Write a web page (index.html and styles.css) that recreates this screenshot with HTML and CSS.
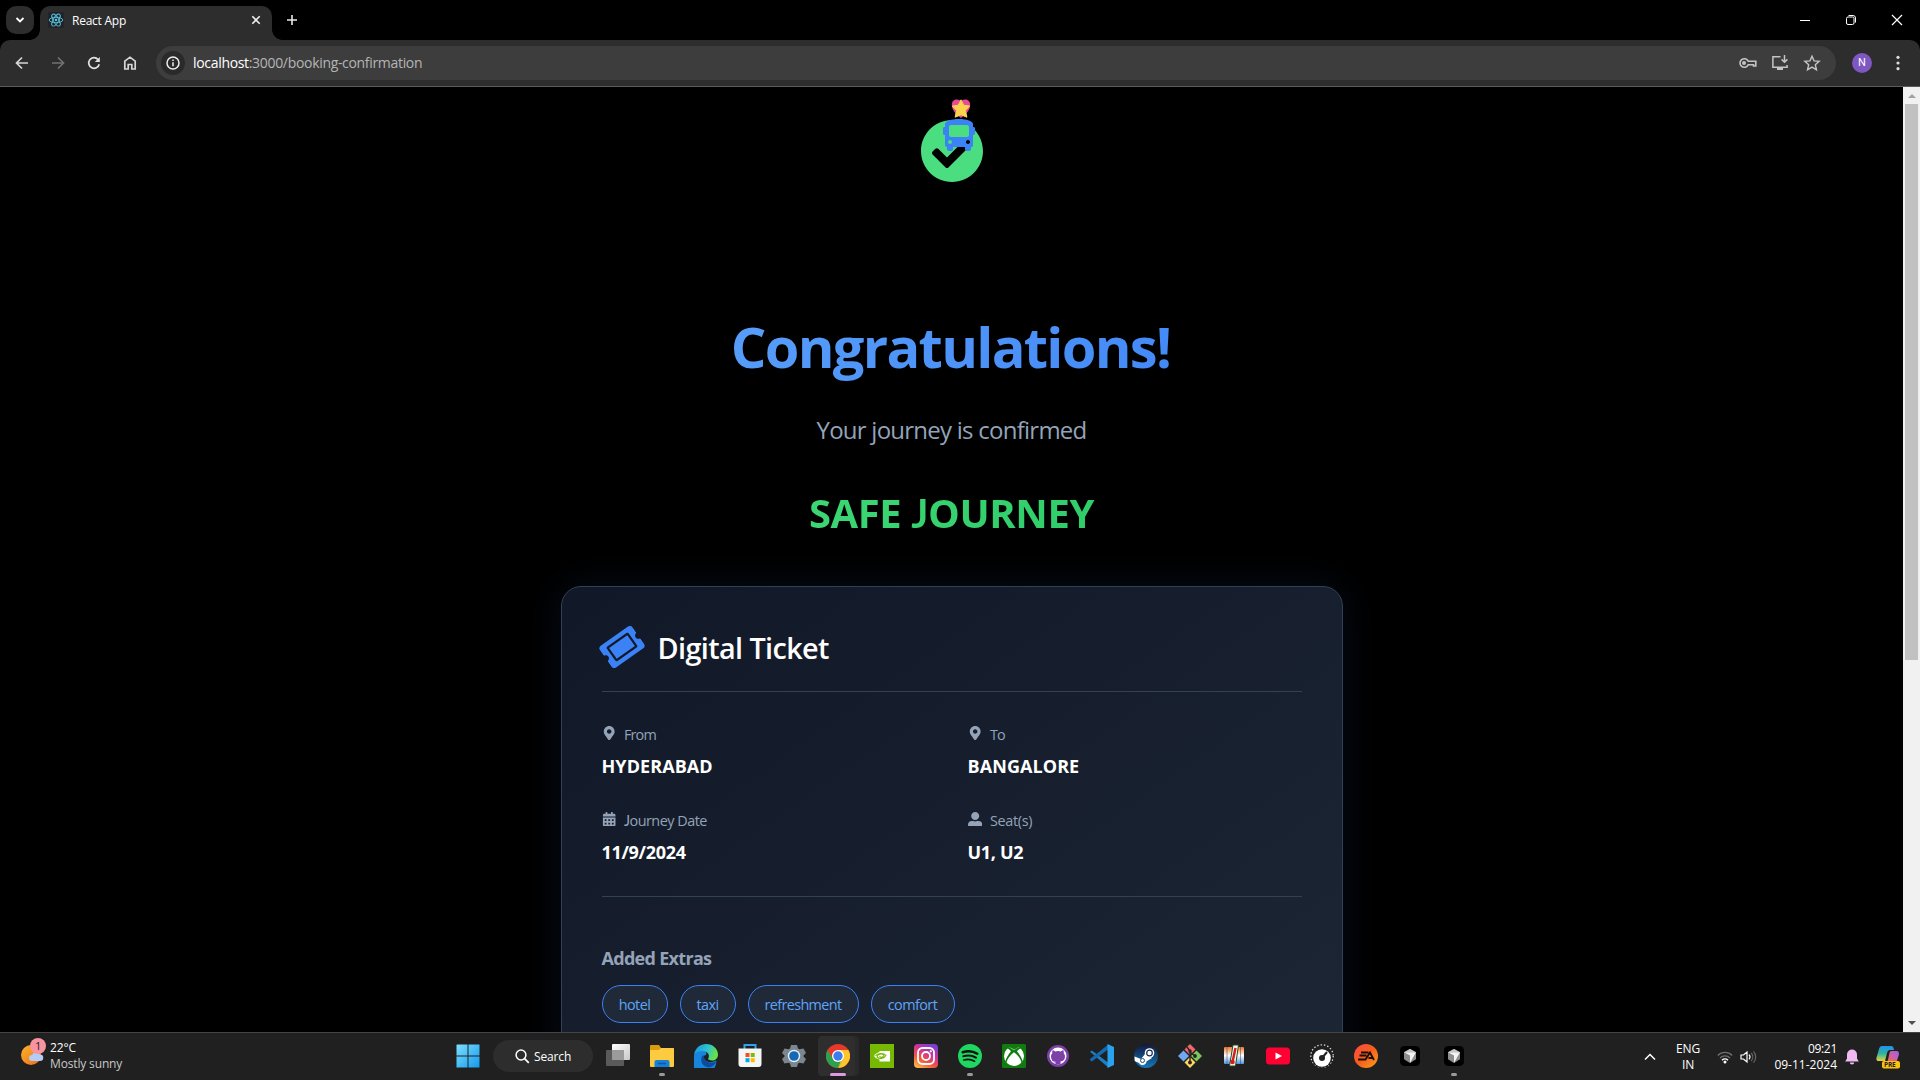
FILE: index.html
```html
<!DOCTYPE html>
<html lang="en">
<head>
<meta charset="utf-8">
<title>React App</title>
<link rel="stylesheet" href="styles.css">
</head>
<body>
<div class="tabs">
  <div class="tab-search"><svg width="10" height="10" viewBox="0 0 10 10"><path d="M1.5 3l3.5 3.5L8.500 3" fill="none" stroke="#fff" stroke-width="1.8"/></svg></div>
  <div class="tab">
    <svg class="favicon" width="16" height="16" viewBox="0 0 16 16"><rect width="16" height="16" rx="2" fill="#20232a"/><g fill="none" stroke="#58c4dc" stroke-width=".9"><ellipse cx="8" cy="8" rx="6.800" ry="2.700"/><ellipse cx="8" cy="8" rx="6.800" ry="2.700" transform="rotate(60 8 8)"/><ellipse cx="8" cy="8" rx="6.800" ry="2.700" transform="rotate(120 8 8)"/></g><circle cx="8" cy="8" r="1.300" fill="#58c4dc"/></svg>
    <span class="tab-title">React App</span>
    <svg class="tab-close" width="10" height="10" viewBox="0 0 10 10"><path d="M1.300 1.300l7.400 7.400M8.700 1.300L1.300 8.700" stroke="#eee" stroke-width="1.600"/></svg>
  </div>
  <svg class="new-tab" width="12" height="12" viewBox="0 0 12 12"><path d="M6 1v10M1 6h10" stroke="#e8e8e8" stroke-width="1.600"/></svg>
  <div class="window-controls">
    <svg width="12" height="12" viewBox="0 0 12 12"><path d="M1 6.500h10" stroke="#fff"/></svg>
    <svg width="12" height="12" viewBox="0 0 12 12"><rect x="1.500" y="3" width="7.500" height="7.500" rx="1.500" fill="none" stroke="#fff"/><path d="M3.500 1.500h4.500a2.500 2.500 0 0 1 2.500 2.500v4.500" fill="none" stroke="#fff"/></svg>
    <svg width="12" height="12" viewBox="0 0 12 12"><path d="M1 1l10 10M11 1L1 11" stroke="#fff" stroke-width="1.200"/></svg>
  </div>
</div>
<div class="toolbar">
  <svg class="nav" width="16" height="16" viewBox="0 0 16 16"><path d="M14 8H3M8 2.500L2.500 8 8 13.500" fill="none" stroke="#d6d6d6" stroke-width="1.700"/></svg>
  <svg class="nav" width="16" height="16" viewBox="0 0 16 16"><path d="M2 8h11M8 2.500L13.500 8 8 13.500" fill="none" stroke="#717171" stroke-width="1.700"/></svg>
  <svg class="nav" width="16" height="16" viewBox="0 0 16 16"><path d="M13.200 9.200A5.300 5.300 0 1 1 12 4.500" fill="none" stroke="#e2e2e2" stroke-width="1.700"/><path d="M13.800 2v5H8.800z" fill="#e2e2e2"/></svg>
  <svg class="nav" width="16" height="16" viewBox="0 0 16 16"><path d="M2.800 14V6.200L8 2.200l5.200 4V14H9.800V9.500H6.200V14z" fill="none" stroke="#d6d6d6" stroke-width="1.700"/></svg>
  <div class="omnibox">
    <div class="site-info"><svg width="14" height="14" viewBox="0 0 14 14"><circle cx="7" cy="7" r="6" fill="none" stroke="#eee" stroke-width="1.500"/><path d="M7 6.200V10.300M7 3.600V5.100" stroke="#eee" stroke-width="1.500"/></svg></div>
    <span class="url"><b>localhost</b>:3000/booking-confirmation</span>
    <div class="omni-icons">
      <svg width="20" height="18" viewBox="0 0 20 18"><path d="M11.200 7.200H18.800V12H16.500V10.800H11.200A4.300 4.300 0 1 1 11.200 7.200z" fill="none" stroke="#c4c4c4" stroke-width="1.600"/><circle cx="7" cy="9" r="2" fill="#c4c4c4"/></svg>
      <svg width="18" height="18" viewBox="0 0 18 18"><path d="M9.500 2.700H1.900V13.300H16.100V11M13.500 1v7M10.600 5.400l2.900 2.900 2.900-2.900" fill="none" stroke="#c4c4c4" stroke-width="1.500"/><path d="M6 13h6v3H6z" fill="#c4c4c4"/></svg>
      <svg width="18" height="18" viewBox="0 0 18 18"><path d="M9 2.200l2.050 4.700 5.100.45-3.850 3.350 1.150 5L9 13.050 4.550 15.700l1.150-5L1.850 7.350l5.100-.45z" fill="none" stroke="#c4c4c4" stroke-width="1.400"/></svg>
    </div>
  </div>
  <div class="avatar">N</div>
  <svg class="menu" width="4" height="16" viewBox="0 0 4 16" fill="#ddd"><circle cx="2" cy="2.300" r="1.600"/><circle cx="2" cy="8" r="1.600"/><circle cx="2" cy="13.700" r="1.600"/></svg>
</div>
<div class="viewport">
  <main class="page">
    <div class="success">
      <svg class="check" width="64" height="64" viewBox="0 0 512 512" fill="#4ade80"><path d="M504 256c0 136.967-111.033 248-248 248S8 392.967 8 256 119.033 8 256 8s248 111.033 248 248zM227.314 387.314l184-184c6.248-6.248 6.248-16.379 0-22.627l-22.627-22.627c-6.248-6.249-16.379-6.249-22.628 0L216 308.118l-70.059-70.059c-6.248-6.248-16.379-6.248-22.628 0l-22.627 22.627c-6.248 6.248-6.248 16.379 0 22.627l104 104c6.249 6.249 16.379 6.249 22.628.001z"/></svg>
      <svg class="bus" width="32" height="32" viewBox="0 0 512 512" fill="#3b82f6"><path d="M488 128h-8V80c0-44.800-99.200-80-224-80S32 35.200 32 80v48h-8c-13.250 0-24 10.740-24 24v80c0 13.250 10.750 24 24 24h8v160c0 17.670 14.330 32 32 32v32c0 17.670 14.330 32 32 32h32c17.670 0 32-14.330 32-32v-32h192v32c0 17.670 14.330 32 32 32h32c17.670 0 32-14.330 32-32v-32h6.400c16 0 25.600-12.800 25.600-25.600V256h8c13.250 0 24-10.750 24-24v-80c0-13.260-10.750-24-24-24zM112 400c-17.670 0-32-14.330-32-32s14.330-32 32-32 32 14.330 32 32-14.330 32-32 32zm16-112c-17.670 0-32-14.330-32-32V128c0-17.670 14.330-32 32-32h256c17.670 0 32 14.330 32 32v128c0 17.670-14.330 32-32 32H128zm272 112c-17.670 0-32-14.330-32-32s14.330-32 32-32 32 14.330 32 32-14.330 32-32 32z"/></svg>
      <svg class="star" width="20" height="20" viewBox="0 0 20 20"><path d="M10 19C5 15 .8 11 .8 6 .8 0 8 -1 10 3 12-1 19.200 0 19.200 6 19.200 11 15 15 10 19z" fill="#ec4899"/><path d="M10 .8l2.700 5.400 6 .9-4.300 4.300 1.500 6.800L10 15.800 4.100 18.200l1.500-6.800L1.300 7.100l6-.9z" fill="#fcd34d" stroke="#fcd34d" stroke-linejoin="round"/></svg>
    </div>
    <h1 class="title">Congratulations!</h1>
    <p class="subtitle">Your journey is confirmed</p>
    <h2 class="safe">SAFE <span class="straight-j">J</span>OURNEY</h2>
    <section class="card">
      <header class="card-head">
        <svg class="ticket" width="40" height="40" viewBox="0 0 576 512" fill="#3b82f6"><path d="M128 160h320v192H128V160zm400 96c0 26.510 21.490 48 48 48v96c0 26.510-21.490 48-48 48H48c-26.510 0-48-21.490-48-48v-96c26.510 0 48-21.490 48-48s-21.490-48-48-48v-96c0-26.510 21.490-48 48-48h480c26.510 0 48 21.490 48 48v96c-26.510 0-48 21.490-48 48zm-48-104c0-13.255-10.745-24-24-24H120c-13.255 0-24 10.745-24 24v208c0 13.255 10.745 24 24 24h336c13.255 0 24-10.745 24-24V152z"/></svg>
        <h3 class="card-title">Digital Ticket</h3>
      </header>
      <div class="details">
        <div class="item">
          <div class="label tight"><svg width="14.400" height="14.400" viewBox="0 0 384 512"><path d="M172.268 501.670C26.970 291.031 0 269.413 0 192 0 85.961 85.961 0 192 0s192 85.961 192 192c0 77.413-26.970 99.031-172.268 309.670-9.535 13.774-29.930 13.773-39.464 0zM192 272c44.183 0 80-35.817 80-80s-35.817-80-80-80-80 35.817-80 80 35.817 80 80 80z"/></svg><span>From</span></div>
          <div class="value">HYDERABAD</div>
        </div>
        <div class="item">
          <div class="label tight"><svg width="14.400" height="14.400" viewBox="0 0 384 512"><path d="M172.268 501.670C26.970 291.031 0 269.413 0 192 0 85.961 85.961 0 192 0s192 85.961 192 192c0 77.413-26.970 99.031-172.268 309.670-9.535 13.774-29.930 13.773-39.464 0zM192 272c44.183 0 80-35.817 80-80s-35.817-80-80-80-80 35.817-80 80 35.817 80 80 80z"/></svg><span>To</span></div>
          <div class="value">BANGALORE</div>
        </div>
        <div class="item">
          <div class="label date"><svg width="14.400" height="14.400" viewBox="0 0 448 512"><path fill-rule="evenodd" d="M0 464c0 26.500 21.500 48 48 48h352c26.500 0 48-21.500 48-48V192H0zM64 256h64v64H64zm128 0h64v64h-64zm128 0h64v64h-64zM64 384h64v64H64zm128 0h64v64h-64zm128 0h64v64h-64zM400 64h-48V16c0-8.800-7.200-16-16-16h-32c-8.800 0-16 7.200-16 16v48H160V16c0-8.800-7.200-16-16-16h-32c-8.800 0-16 7.200-16 16v48H48C21.500 64 0 85.500 0 112v48h448v-48c0-26.500-21.500-48-48-48z"/></svg><span><span class="straight-j">J</span>ourney Date</span></div>
          <div class="value digits">11/9/2024</div>
        </div>
        <div class="item">
          <div class="label"><svg width="14.400" height="14.400" viewBox="0 0 512 512"><path d="M256 288c79.500 0 144-64.500 144-144S335.500 0 256 0 112 64.500 112 144s64.500 144 144 144zm128 32h-55.100c-22.200 10.200-46.900 16-72.900 16s-50.600-5.800-72.900-16H128C57.300 320 0 377.300 0 448v16c0 26.500 21.500 48 48 48h416c26.500 0 48-21.500 48-48v-16c0-70.700-57.300-128-128-128z"/></svg><span>Seat(s)</span></div>
          <div class="value digits">U1, U2</div>
        </div>
      </div>
      <div class="extras">
        <h4 class="extras-title">Added Extras</h4>
        <div class="pills">
          <div class="pill hotel">hotel</div>
          <div class="pill taxi">taxi</div>
          <div class="pill refreshment">refreshment</div>
          <div class="pill comfort">comfort</div>
        </div>
      </div>
    </section>
  </main>
  <div class="scrollbar"><span class="arrow up"></span><span class="thumb"></span><span class="arrow down"></span></div>
</div>
<footer class="taskbar">
  <div class="weather">
    <svg width="28" height="30" viewBox="0 0 28 30"><defs><linearGradient id="sun" x1="0" y1="0" x2="1" y2="1"><stop offset="0" stop-color="#f9b52b"/><stop offset="1" stop-color="#ee6c1c"/></linearGradient></defs><circle cx="11" cy="17" r="10" fill="url(#sun)"/><path d="M12 23a3 3 0 0 1 0-6 4.500 4.500 0 0 1 8-.5 3.200 3.200 0 0 1 0 6.500z" fill="#b3cdf5"/><circle cx="18" cy="8" r="8" fill="#f8949f"/><text x="15" y="12" class="badge-num">1</text></svg>
    <div class="weather-text"><span>22°C</span><span class="dim">Mostly sunny</span></div>
  </div>
  <div class="center-bar">
    <div class="start"><svg width="24" height="24" viewBox="0 0 24 24"><defs><linearGradient id="win" x1="0" y1="0" x2="1" y2="1"><stop offset="0" stop-color="#7be0ff"/><stop offset="1" stop-color="#1499ec"/></linearGradient></defs><path d="M1 .5h10.500V11.500H.5V1zM12.500.5h11V11.500h-11zM.5 12.500h11v11H.5zM12.500 12.500h11v11h-11z" fill="url(#win)"/></svg></div>
    <div class="search"><svg width="15" height="15" viewBox="0 0 15 15"><circle cx="6" cy="6" r="4.900" fill="none" stroke="#fff" stroke-width="1.500"/><path d="M9.600 9.600L13.800 13.800" stroke="#fff" stroke-width="1.800"/></svg><span>Search</span></div>
    <div class="apps">
      <div class="app"><svg viewBox="0 0 24 24"><defs><linearGradient id="tv" x1="0" y1="0" x2="1" y2="1"><stop offset="0" stop-color="#fff"/><stop offset="1" stop-color="#c8c8c8"/></linearGradient></defs><rect x="6" width="18" height="16" rx="1" fill="url(#tv)"/><rect y="6" width="18" height="16" rx="1" fill="#5a5a5a"/><rect x="6" y="6" width="12" height="10" fill="#9b9b9b"/></svg></div>
      <div class="app running"><svg viewBox="0 0 24 24"><path d="M0 2a1 1 0 0 1 1-1h8l2 3h12a1 1 0 0 1 1 1v4H0z" fill="#dc9a0e"/><path d="M0 6h9l2-2h12a1 1 0 0 1 1 1v17a1 1 0 0 1-1 1H1a1 1 0 0 1-1-1z" fill="#fdcb3f"/><path d="M4.500 23v-5a2 2 0 0 1 2-2h11a2 2 0 0 1 2 2v5z" fill="#1580d6"/><path d="M8 19.500h8" stroke="#0a5ba5" stroke-width="1.500"/></svg></div>
      <div class="app"><svg viewBox="0 0 24 24"><defs><linearGradient id="e1" x1="0" y1="0" x2="1" y2=".3"><stop offset="0" stop-color="#1b8de0"/><stop offset=".6" stop-color="#2dc4cf"/><stop offset="1" stop-color="#66e04b"/></linearGradient></defs><path d="M.1 11C1 5 5 4 9 5c3 1 4 4 3 6-4 0-3 6 3 7 3 .5 5-.5 7.300-1.500A12 12 0 1 1 .1 11z" fill="#1785dc"/><path d="M.2 10C1.500 3.500 6.500 0 12 0c7 0 12 5 12 10.500 0 4-3 6-6 6-2.800 0-4.200-1-3.800-1.900C16 12 14.500 7 8.500 7 5 7 1.500 8.500.2 10z" fill="url(#e1)"/><path d="M8.500 11.500C5 17 9 23 15 23.500c3.500-.5 6-3 7.300-6-5 2.500-12 1-12.500-6z" fill="#0b4d9c"/></svg></div>
      <div class="app"><svg viewBox="0 0 24 24"><path d="M6.500 5V1h11v4" fill="none" stroke="#2aa7ea" stroke-width="2"/><path d="M.5 4.500h23V20a3 3 0 0 1-3 3h-17a3 3 0 0 1-3-3z" fill="#f5f5f5"/><path d="M7.500 9h4v4h-4z" fill="#f25022"/><path d="M12.700 9h4v4h-4z" fill="#7fba00"/><path d="M7.500 14.200h4v4h-4z" fill="#00a4ef"/><path d="M12.700 14.200h4v4h-4z" fill="#ffb900"/></svg></div>
      <div class="app"><svg viewBox="0 0 24 24"><path d="M9 1h6l1 3.500 1.500.8L21.500 4.500 24 9l-2.500 2.500v1L24 15l-2.500 4.500L17.500 18.700l-1.500.8L15 23H9l-1-3.500-1.500-.8-4 .8L0 15l2.500-2.500v-1L0 9l2.500-4.500 4 .8 1.500-.8z" fill="#7c868f"/><circle cx="12" cy="12" r="6.200" fill="#e6eef5"/><circle cx="12" cy="12" r="4.800" fill="#1468b8"/></svg></div>
      <div class="app active"><svg viewBox="0 0 24 24"><circle cx="12" cy="12" r="12" fill="#e8382b"/><path d="M1.600 6L9 18.500 12 24A12 12 0 0 1 1.600 6z" fill="#2ba24c"/><path d="M12 6h10.400A12 12 0 0 1 12 24l5-9z" fill="#fdc52c"/><path d="M6.800 15L12 24l5.200-9z" fill="#2ba24c"/><path d="M12 24l5.200-9-1.200-1z" fill="#fdc52c"/><circle cx="12" cy="12" r="6" fill="#fff"/><circle cx="12" cy="12" r="4.700" fill="#3b7ded"/></svg></div>
      <div class="app"><svg viewBox="0 0 24 24"><path d="M0 0h24v24H0z" fill="#76b900"/><path d="M9.500 7H20v10.500H9.500z" fill="#fff"/><path d="M4 12c2-3.500 5-4.500 8.500-4 2 .5 4 2 5 3.500-1.500 2-3.500 4-6.500 4-3.500 0-5.500-1.500-7-3.500z" fill="#fff"/><path d="M5.500 12c2-3 8-3.500 10.500-.5-2 3.200-6.500 4-9 1.500.5-3 5-4 7-1.500-1 2-3.500 2.500-4.500.8" fill="none" stroke="#76b900" stroke-width="1.100"/></svg></div>
      <div class="app"><svg viewBox="0 0 24 24"><defs><linearGradient id="ig" x1=".1" y1="1" x2=".7" y2="0"><stop offset="0" stop-color="#fdc24a"/><stop offset=".35" stop-color="#f4583c"/><stop offset=".7" stop-color="#c832a0"/><stop offset="1" stop-color="#7b3fd0"/></linearGradient></defs><rect width="24" height="24" rx="4" fill="url(#ig)"/><g fill="none" stroke="#fff" stroke-width="1.800"><rect x="4" y="4" width="16" height="16" rx="4.500"/><circle cx="12" cy="12" r="4"/></g><circle cx="16.800" cy="7.300" r="1.100" fill="#fff"/></svg></div>
      <div class="app running"><svg viewBox="0 0 24 24"><circle cx="12" cy="12" r="12" fill="#1ed760"/><g fill="none" stroke="#111" stroke-linecap="round"><path d="M4.700 8.200c5-1.500 10.500-1 14.600 1.500" stroke-width="2.500"/><path d="M5.300 12.200c4.500-1.300 9-.8 12.700 1.400" stroke-width="2"/><path d="M5.800 16c3.800-1 7.500-.7 10.700 1.200" stroke-width="1.700"/></g></svg></div>
      <div class="app"><svg viewBox="0 0 24 24"><rect width="24" height="24" rx="1.500" fill="#107c10"/><circle cx="12" cy="12" r="10" fill="#fff"/><path d="M5 3.300C7.500 3 10 4.300 12 5.800 14 4.300 16.500 3 19 3.300A11 11 0 0 0 5 3.300z" fill="#107c10"/><path d="M12 8.200C7.500 11.500 4.500 16 4.200 20.500L3 18.500C4 14 6.300 10.500 9 7.200 7.500 5.600 6 4.400 4.600 4L6 3.200C8 3.500 10 4.600 12 6.200c2-1.600 4-2.700 6-3l1.400.8C18 4.400 16.500 5.600 15 7.200c2.700 3.300 5 6.800 6 11.300l-1.200 2C19.500 16 16.500 11.500 12 8.200z" fill="#107c10"/></svg></div>
      <div class="app"><svg viewBox="0 0 24 24"><circle cx="12" cy="12" r="11" fill="#7d3fa8"/><circle cx="12" cy="12" r="8.500" fill="#fff"/><path d="M9.500 20.500v-3c-3-.3-4.500-2-4.500-5 0-1.400.5-2.500 1.300-3.300-.2-.9-.1-2 .2-2.900 1 0 2 .6 2.700 1.200a10 10 0 0 1 5.600 0c.7-.6 1.700-1.200 2.700-1.200.3.900.4 2 .2 2.900.8.800 1.300 1.900 1.300 3.300 0 3-1.500 4.700-4.500 5v3z" fill="#7d3fa8"/><path d="M6 16c1.500.2 1.200 2.300 3.800 2" fill="none" stroke="#7d3fa8"/></svg></div>
      <div class="app"><svg viewBox="0 0 24 24"><path d="M0 8l1.800-1.600L18 18.500v4.800L1.500 9z" fill="#1c7fc6"/><path d="M0 16l1.800 1.600L18 5.500V.7L0 15z" fill="#1469ae"/><path d="M17.500 0L24 3v18l-6.500 3z" fill="#2aa3ef"/></svg></div>
      <div class="app"><svg viewBox="0 0 24 24"><defs><linearGradient id="st" x1="0" y1="0" x2="0" y2="1"><stop offset="0" stop-color="#13173a"/><stop offset="1" stop-color="#1579b8"/></linearGradient></defs><circle cx="12" cy="12" r="12" fill="url(#st)"/><path d="M.5 12.500l6.500 2.500 4-5 7 4-5.500 3.500A4 4 0 0 1 5 19l-4.300-2z" fill="#fff"/><circle cx="15.500" cy="9" r="4.800" fill="#fff"/><circle cx="15.500" cy="9" r="2.800" fill="#fff" stroke="#172b50" stroke-width="1.200"/><circle cx="8.500" cy="16.500" r="2" fill="none" stroke="#1b5084"/></svg></div>
      <div class="app"><svg viewBox="0 0 24 24"><path d="M12 0l5.500 5.500L12 11 6.500 5.500z" fill="#f0686b"/><path d="M5.500 6.500L11 12l-5.500 5.500L0 12z" fill="#70a8f5"/><path d="M18.500 6.500L24 12l-5.500 5.500L13 12z" fill="#7cc95b"/><path d="M12 13l5.500 5.500L12 24l-5.500-5.500z" fill="#fbd760"/><path d="M9 3l3 4v12M12 8l5 4" stroke="#2b2225" stroke-width="1.400" fill="none"/><circle cx="12" cy="7" r="1.700" fill="#2b2225"/><circle cx="17" cy="12" r="1.900" fill="#2b2225"/><circle cx="12" cy="18.500" r="1.900" fill="#2b2225"/></svg></div>
      <div class="app"><svg viewBox="0 0 24 24"><defs><linearGradient id="th" gradientUnits="userSpaceOnUse" x1="0" y1="3" x2="0" y2="20"><stop offset="0" stop-color="#f07a26"/><stop offset=".5" stop-color="#fff"/><stop offset="1" stop-color="#4f94e6"/></linearGradient></defs><rect x="2" y="3" width="20" height="17" rx="1" fill="url(#th)"/><path d="M5 3v17M18.500 3v17" stroke="#3c3c3c" stroke-width=".5"/><path d="M11 1h5.500l-3 21H7.500z" fill="#f3f8e9" stroke="#244b2b"/><path d="M13.500 4l-3 14" stroke="#d41c1c" stroke-width="2.400"/><circle cx="10.500" cy="18" r="2.300" fill="#d41c1c"/></svg></div>
      <div class="app"><svg viewBox="0 0 24 24"><rect y="3.500" width="24" height="17" rx="3.500" fill="#ff0033"/><path d="M9.500 8.500v7l6.500-3.500z" fill="#fff"/></svg></div>
      <div class="app"><svg viewBox="0 0 24 24"><circle cx="12" cy="12" r="11.200" fill="none" stroke="#ddd" stroke-width="1.300" stroke-dasharray="1.400 2"/><circle cx="12" cy="14" r="9.800" fill="#202020"/><circle cx="12" cy="14" r="8.800" fill="#fff"/><circle cx="12" cy="14" r="3" fill="#222"/><path d="M12 14l5-6" stroke="#222" stroke-width="2"/></svg></div>
      <div class="app"><svg viewBox="0 0 24 24"><defs><linearGradient id="ea" x1="0" y1="0" x2="1" y2="1"><stop offset="0" stop-color="#ff4747"/><stop offset=".5" stop-color="#f4601c"/><stop offset="1" stop-color="#fda01c"/></linearGradient></defs><circle cx="12" cy="12" r="12" fill="url(#ea)"/><path d="M7 8.500h7.500M5.500 11.500h7M4 15.500h7.500L16 8.500l4 7.500M14.500 14h4" fill="none" stroke="#1b0c08" stroke-width="1.800"/></svg></div>
      <div class="app"><svg viewBox="0 0 24 24"><rect x="2" y="2" width="20" height="20" rx="4.500" fill="#000"/><path d="M12 5l6 3.300v7L12 19l-6-3.700v-7z" fill="#8d8d8d"/><path d="M6 8.300h12L12 19v-7.500z" fill="#f3f3f3"/><path d="M6 8.300L12 5l6 3.300z" fill="#c9c9c9"/></svg></div>
      <div class="app running"><svg viewBox="0 0 24 24"><rect x="2" y="2" width="20" height="20" rx="4.500" fill="#000"/><path d="M12 5l6 3.300v7L12 19l-6-3.700v-7z" fill="#8d8d8d"/><path d="M6 8.300h12L12 19v-7.500z" fill="#f3f3f3"/><path d="M6 8.300L12 5l6 3.300z" fill="#c9c9c9"/></svg></div>
    </div>
  </div>
  <div class="tray">
    <svg width="12" height="8" viewBox="0 0 12 8"><path d="M1 6.500l5-5 5 5" fill="none" stroke="#fff" stroke-width="1.500"/></svg>
    <div class="lang"><span>ENG</span><span>IN</span></div>
    <svg class="wifi" width="16" height="14" viewBox="0 0 16 14" fill="none"><path d="M.8 5.500a10 10 0 0 1 14.400 0M3 8a7 7 0 0 1 10 0" stroke="#6f6f6f" stroke-width="1.200"/><path d="M5 10.200a4.200 4.200 0 0 1 6 0" stroke="#fff" stroke-width="1.300"/><circle cx="8" cy="12" r="1.500" fill="#fff"/></svg>
    <svg class="sound" width="17" height="14" viewBox="0 0 17 14" fill="none"><path d="M7 2v10L3.500 9H1V5h2.500zM9 4.700a3.500 3.500 0 0 1 0 4.600" stroke="#fff" stroke-width="1.200"/><path d="M11.200 3a6 6 0 0 1 0 8M13.500 1.300a8.500 8.500 0 0 1 0 11.400" stroke="#666" stroke-width="1.200"/></svg>
    <div class="clock"><span class="time">09:21</span><span>09-11-2024</span></div>
    <svg class="bell" width="14" height="16" viewBox="0 0 14 16"><path d="M7 .5a5 5 0 0 1 5 5v4l1.800 3H.2l1.800-3v-4a5 5 0 0 1 5-5zM4.800 13.500h4.400a2.200 2 0 0 1-4.400 0z" fill="#f0b9f2"/></svg>
    <svg class="copilot" width="24" height="24" viewBox="0 0 24 24"><defs><linearGradient id="c1" x1="0" y1="0" x2="0" y2="1"><stop offset="0" stop-color="#2390ee"/><stop offset=".5" stop-color="#2bb5a0"/><stop offset="1" stop-color="#e9d23a"/></linearGradient><linearGradient id="c2" x1="1" y1="0" x2="0" y2="1"><stop offset="0" stop-color="#a05cf0"/><stop offset="1" stop-color="#f4675d"/></linearGradient></defs><path d="M6 1h9c2 0 2.500 1.500 3 4h-4c-1.500 0-2.500 1-3 3L9 16H3c-3 0-3-2-2-5l2-7c.6-2 1.500-3 3-3z" fill="url(#c1)"/><path d="M15 6h5c3 0 3.500 2 2.500 5l-2 6h-9l2-9c.3-1.200.7-2 1.500-2z" fill="url(#c2)"/><rect x="6" y="16" width="18" height="7.500" rx="2" fill="#fdc30b"/><text x="8" y="22.300" class="pre">PRE</text></svg>
  </div>
</footer>
</body>
</html>
```
FILE: styles.css
```css
* { box-sizing: border-box; }
body { margin: 0; height: 1080px; overflow: hidden; display: flex; flex-direction: column; background: #000; color: #fff; font-family: "Open Sans", "Noto Sans", sans-serif; }
h1, h2, h3, h4, p { margin: 0; }
svg { display: block; flex: none; }

.tabs { height: 40px; flex: none; display: flex; align-items: flex-start; padding: 6px 0 0 6px; }
.tab-search { width: 28px; height: 28px; border-radius: 10px; background: #2d2d2d; display: grid; place-items: center; }
.tab { position: relative; width: 232px; height: 34px; margin-left: 6px; padding: 0 11px 6px 8px; display: flex; align-items: center; background: #2d2d2d; border-radius: 10px 10px 0 0; font-size: 12px; }
.tab::before, .tab::after { content: ""; position: absolute; bottom: 0; width: 10px; height: 10px; }
.tab::before { left: -10px; background: radial-gradient(circle at 0 0, transparent 9.5px, #2d2d2d 10px); }
.tab::after { right: -10px; background: radial-gradient(circle at 100% 0, transparent 9.5px, #2d2d2d 10px); }
.tab-title { margin: 2px 0 0 8px; white-space: nowrap; line-height: 16px; letter-spacing: -.25px; }
.tab-close { margin-left: auto; }
.new-tab { margin: 8px 0 0 14px; }
.window-controls { margin: 8px 17px 0 auto; display: flex; gap: 34px; }

.toolbar { height: 47px; flex: none; display: flex; align-items: center; padding: 0 20px 1px 14px; background: #2d2d2d; border-bottom: 1px solid #5c5c5c; border-radius: 10px 10px 0 0; }
.nav { margin-right: 20px; }
.omnibox { flex: 1; height: 34px; margin-left: -2px; border-radius: 17px; background: #3d3d3d; display: flex; align-items: center; padding: 0 15px 0 5px; }
.site-info { width: 24px; height: 24px; border-radius: 50%; background: #2a2a2a; display: grid; place-items: center; }
.url { margin: 1px 0 0 8px; font-size: 14px; line-height: 20px; letter-spacing: -.32px; color: #b5b5b5; white-space: nowrap; }
.url b { font-weight: 400; color: #fff; }
.omni-icons { margin-left: auto; display: flex; gap: 14px; }
.avatar { width: 20px; height: 20px; margin: 0 24px 0 16px; border-radius: 50%; background: #7e57c2; font: 11px/20px Roboto, sans-serif; text-align: center; }

.viewport { height: 945px; flex: none; display: flex; overflow: hidden; }
.page { flex: 1; display: flex; flex-direction: column; align-items: center; padding-top: 32px; }
.success { position: relative; width: 64px; height: 64px; }
.bus { position: absolute; left: 23.500px; top: 0; }
.star { position: absolute; left: 31px; top: -20px; }
.title, .subtitle, .safe { width: 800px; text-align: center; white-space: nowrap; }
.title { margin-top: 125px; padding-right: 2px; font-size: 56px; line-height: 76px; font-weight: 700; letter-spacing: -1.700px; color: transparent; background: linear-gradient(135deg, #60a5fa, #3b82f6); background-clip: text; }
.subtitle { margin-top: 30px; font-size: 24px; line-height: 32px; letter-spacing: -.75px; color: #94a3b8; }
.safe { margin-top: 40px; font-size: 40px; line-height: 54px; font-weight: 700; letter-spacing: -.4px; color: transparent; background: linear-gradient(135deg, #4ade80, #22c55e); background-clip: text; }
.straight-j { font-family: Lato, sans-serif; }
.card { flex: none; width: 782px; height: 700px; margin-top: 46px; padding: 40px; border: 1px solid #334155; border-radius: 20px; background: linear-gradient(145deg, #111827, #1f2937); box-shadow: 0 0 40px rgba(59, 130, 246, .1); }
.card-head { height: 65px; display: flex; align-items: flex-start; border-bottom: 1px solid #334155; }
.ticket { transform: rotate(-35deg); }
.card-title { margin: 1px 0 0 16px; font-size: 28.800px; line-height: 40px; font-weight: 600; letter-spacing: -.6px; }
.details { display: grid; grid-template-columns: 1fr 1fr; gap: 32px; padding: 32px 0; border-bottom: 1px solid #334155; }
.item { height: 54px; }
.label { display: flex; height: 22px; font-size: 14.400px; line-height: 22px; letter-spacing: -.3px; color: #94a3b8; }
.label.tight { letter-spacing: -.8px; }
.label.date { letter-spacing: -.5px; }
.label svg { margin: 2px 8px 0 0; fill: #94a3b8; }
.value { margin-top: 8px; font-size: 18px; line-height: 24px; font-weight: 700; letter-spacing: .08px; }
.value.digits { letter-spacing: -.3px; }
.extras { margin-top: 47px; }
.extras-title { font-size: 18px; line-height: 28px; font-weight: 700; letter-spacing: -.7px; color: #94a3b8; }
.pills { display: flex; gap: 12px; margin-top: 13px; }
.pill { height: 38px; border: 1px solid #3b82f6; border-radius: 20px; background: #1f2937; color: #60a5fa; font-size: 14.400px; line-height: 38px; letter-spacing: -.55px; text-align: center; }
.hotel { width: 66px; }
.taxi { width: 56px; }
.refreshment { width: 111px; letter-spacing: -.62px; }
.comfort { width: 84px; }

.scrollbar { width: 17px; background: #f1f1f1; display: flex; flex-direction: column; align-items: center; }
.thumb { width: 13px; height: 556px; background: #c1c1c1; }
.arrow { width: 0; height: 0; border: 4px solid transparent; }
.up { margin: 3px 0 6px; border-bottom-color: #a3a3a3; }
.down { margin: auto 0 3px; border-top-color: #505050; }

.taskbar { position: relative; height: 48px; flex: none; display: flex; background: #202020; border-top: 1px solid #444; font-size: 12px; line-height: 16px; letter-spacing: -.15px; }
.taskbar span { white-space: nowrap; }
.weather { width: 456px; display: flex; padding: 5px 0 0 20px; }
.weather-text { display: flex; flex-direction: column; align-items: flex-start; margin: 2px 0 0 2px; }
.dim { color: #c8c8c8; }
.badge-num { font-size: 11px; fill: #222; }
.center-bar { display: flex; align-items: center; margin-top: -1px; }
.start { width: 37px; }
.search { width: 100px; height: 32px; border-radius: 16px; background: #2d2d2d; display: flex; align-items: center; padding: 1px 0 0 22px; gap: 4px; }
.apps { display: flex; margin-left: 3px; }
.app { position: relative; width: 44px; height: 40px; display: grid; place-items: center; }
.app > svg { position: relative; width: 24px; height: 24px; }
.running::after, .active::after { content: ""; position: absolute; left: 19px; bottom: 0; width: 6px; height: 3px; border-radius: 2px; background: #999; }
.active::after { left: 14px; width: 16px; background: #dc9be0; }
.active::before { content: ""; position: absolute; left: 2px; top: 0; width: 37px; height: 40px; border-radius: 4px; background: #2e2e2e; box-shadow: 4px 0 0 #292929; }
.tray { margin-left: auto; display: flex; align-items: center; padding-right: 20px; }
.lang { display: flex; flex-direction: column; align-items: center; width: 24px; margin: 0 17px 0 20px; }
.sound { margin: 0 17px 0 7px; }
.clock { display: flex; flex-direction: column; align-items: flex-end; width: 63px; letter-spacing: 0; }
.time { letter-spacing: -.3px; }
.bell { margin: 0 17px 0 8px; }
.pre { font: 700 6.500px "Open Sans", sans-serif; fill: #222; }
```
